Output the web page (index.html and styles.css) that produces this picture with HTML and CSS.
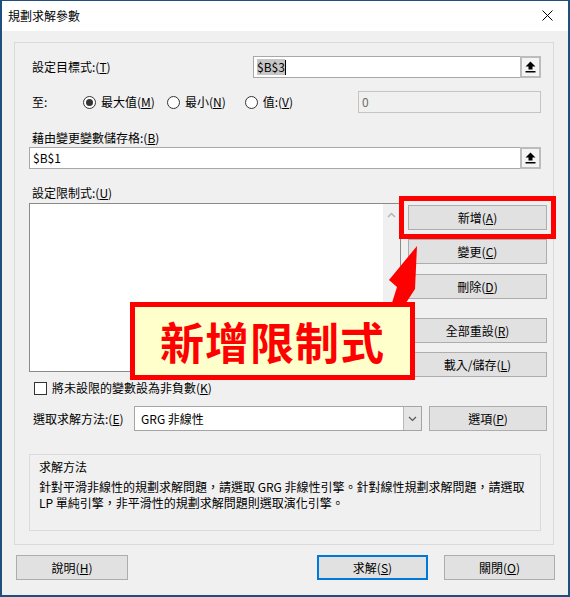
FILE: index.html
```html
<!DOCTYPE html>
<html lang="zh-Hant">
  <head>
    <meta charset="UTF-8" />
    <title>規劃求解參數</title>
    <link rel="stylesheet" href="styles.css">
  </head>
  <body>
    <div class="window">
      <div class="titlebar">
        <span class="title">規劃求解參數</span>
        <svg class="close" width="11" height="11" viewBox="0 0 11 11">
          <path d="M0.5 0.5 L10.5 10.5 M10.5 0.5 L0.5 10.5" stroke="#000" stroke-width="1" fill="none" />
        </svg>
      </div>

      <div class="content">
        <div class="panel">
          <!-- 目標式 -->
          <div class="row target-row">
            <span class="lbl target-lbl">設定目標式:(<u>T</u>)</span>
            <div class="ref-input target-input">
              <span class="selected">$B$3</span><span class="caret"></span>
              <span class="pick">
                <svg width="11" height="12" viewBox="0 0 11 12">
                  <polygon points="5.5,0.5 0.5,5.5 3.5,5.5 3.5,8.5 7.5,8.5 7.5,5.5 10.5,5.5" fill="#000" />
                  <rect x="0.5" y="10" width="10" height="1.5" fill="#000" />
                </svg>
              </span>
            </div>
          </div>

          <!-- 至 -->
          <div class="row to-row">
            <span class="lbl to-lbl">至:</span>
            <span class="radio checked"></span>
            <span class="radio-text">最大值(<u>M</u>)</span>
            <span class="radio r2"></span>
            <span class="radio-text">最小(<u>N</u>)</span>
            <span class="radio r3"></span>
            <span class="radio-text">值:(<u>V</u>)</span>
            <div class="value-input">0</div>
          </div>

          <div class="lbl block-lbl changing-lbl">藉由變更變數儲存格:(<u>B</u>)</div>
          <div class="ref-input full-input">
            <span class="plain">$B$1</span>
            <span class="pick">
              <svg width="11" height="12" viewBox="0 0 11 12">
                <polygon points="5.5,0.5 0.5,5.5 3.5,5.5 3.5,8.5 7.5,8.5 7.5,5.5 10.5,5.5" fill="#000" />
                <rect x="0.5" y="10" width="10" height="1.5" fill="#000" />
              </svg>
            </span>
          </div>

          <div class="lbl block-lbl cons-lbl">設定限制式:(<u>U</u>)</div>
          <div class="cons-area">
            <div class="cons-list">
              <div class="list-body"></div>
              <div class="scrollbar">
                <svg width="9" height="6" viewBox="0 0 9 6">
                  <path d="M1 5 L4.5 1.5 L8 5" stroke="#b4b4b4" stroke-width="1.5" fill="none" />
                </svg>
              </div>
            </div>
            <div class="cons-buttons">
              <button class="btn side-btn annotated">新增(<u>A</u>)</button>
              <button class="btn side-btn b-change">變更(<u>C</u>)</button>
              <button class="btn side-btn b-delete">刪除(<u>D</u>)</button>
              <button class="btn side-btn b-reset">全部重設(<u>R</u>)</button>
              <button class="btn side-btn b-load">載入/儲存(<u>L</u>)</button>
            </div>
          </div>

          <div class="check-row">
            <span class="checkbox"></span>
            <span>將未設限的變數設為非負數(<u>K</u>)</span>
          </div>

          <div class="row method-row">
            <span class="lbl method-lbl">選取求解方法:(<u>E</u>)</span>
            <div class="select">
              <span class="select-text">GRG 非線性</span>
              <span class="drop">
                <svg width="9" height="6" viewBox="0 0 9 6">
                  <path d="M1 1 L4.5 4.5 L8 1" stroke="#555" stroke-width="1.2" fill="none" />
                </svg>
              </span>
            </div>
            <button class="btn opt-btn">選項(<u>P</u>)</button>
          </div>

          <div class="groupbox">
            <div class="group-title">求解方法</div>
            <p class="group-text">針對平滑非線性的規劃求解問題，請選取 GRG 非線性引擎。針對線性規劃求解問題，請選取<br>LP 單純引擎，非平滑性的規劃求解問題則選取演化引擎。</p>
          </div>
        </div>

        <div class="footer">
          <button class="btn foot-btn help-btn">說明(<u>H</u>)</button>
          <span class="spacer"></span>
          <button class="btn foot-btn default">求解(<u>S</u>)</button>
          <button class="btn foot-btn close-btn">關閉(<u>O</u>)</button>
        </div>
      </div>
    </div>

    <!-- 標註 -->
    <svg class="arrow" width="570" height="597" viewBox="0 0 570 597">
      <polygon points="417,246 415,289 404,306 391,306 397,287 389,280" fill="#ff0000" />
    </svg>
    <div class="callout">新增限制式</div>
  </body>
</html>
```

FILE: styles.css
```css
/* dialog like the excel solver window */
* {
  box-sizing: border-box;
}

body {
  margin: 0;
  position: relative;
  width: 570px;
  height: 597px;
  font-family: "Noto Sans CJK TC", "Noto Sans CJK SC", sans-serif;
  font-size: 12px;
  line-height: 16px;
  color: #000;
  background: #fff;
}

u {
  text-decoration: underline;
  text-underline-offset: 1px;
}

.window {
  width: 570px;
  height: 597px;
  border: 2px solid #1f4f7e;
  border-top-width: 1px;
  background: #f0f0f0;
  display: flex;
  flex-direction: column;
}

.titlebar {
  height: 30px;
  background: #fff;
  display: flex;
  align-items: center;
  padding-left: 6px;
}

.titlebar .close {
  margin-left: auto;
  margin-right: 15px;
  margin-top: -1px;
}

.content {
  padding: 11px 14px 0 12px;
}

.panel {
  border: 1px solid #dadada;
  padding: 0 6px 13px 14px;
  display: flex;
  flex-direction: column;
}

.row {
  display: flex;
  align-items: center;
}

.lbl {
  padding-left: 3px;
  white-space: nowrap;
}

.target-row {
  margin-top: 13px;
  height: 22px;
}

.target-lbl {
  width: 224px;
}

.ref-input {
  height: 22px;
  border: 1px solid #a8a8a8;
  background: #fff;
  display: flex;
  align-items: center;
  padding-left: 3px;
}

.target-input {
  width: 288px;
}

.full-input {
  width: 512px;
  margin-top: 1px;
}

.selected {
  background: #c6c6c6;
}

.caret {
  width: 1px;
  height: 15px;
  background: #000;
}

.pick {
  margin: -1px -1px -1px auto;
  width: 21px;
  height: 22px;
  border: 2px solid #bcbcbc;
  background: #f4f4f4;
  display: flex;
  align-items: center;
  justify-content: center;
}

.to-row {
  margin-top: 13px;
  height: 22px;
}

.to-lbl {
  width: 54px;
}

.radio {
  width: 13px;
  height: 13px;
  border: 1px solid #333;
  border-radius: 50%;
  background: #fff;
  margin-right: 5px;
  flex: none;
  display: flex;
  align-items: center;
  justify-content: center;
}

.radio.checked::after {
  content: "";
  width: 7px;
  height: 7px;
  border-radius: 50%;
  background: #333;
}

.r2 {
  margin-left: 12px;
}

.r3 {
  margin-left: 19px;
}

.value-input {
  margin-left: auto;
  margin-right: 6px;
  width: 183px;
  height: 22px;
  border: 1px solid #c4c4c4;
  background: #f0f0f0;
  color: #6d6d6d;
  padding-left: 3px;
  line-height: 20px;
}

.block-lbl {
  height: 16px;
}

.changing-lbl {
  margin-top: 17px;
}

.cons-lbl {
  margin-top: 16px;
}

.cons-area {
  margin-top: 2px;
  display: flex;
  align-items: flex-start;
}

.cons-list {
  width: 372px;
  height: 169px;
  border: 1px solid #8a8a8a;
  display: flex;
}

.list-body {
  flex: 1;
  background: #fff;
}

.scrollbar {
  width: 17px;
  background: #f0f0f0;
  display: flex;
  justify-content: center;
  padding-top: 8px;
}

.cons-buttons {
  margin-left: 7px;
  display: flex;
  flex-direction: column;
}

.btn {
  font: inherit;
  color: #000;
  background: #e1e1e1;
  border: 1px solid #adadad;
  height: 25px;
  padding: 0;
  display: flex;
  align-items: center;
  justify-content: center;
}

.side-btn {
  width: 139px;
}

.annotated {
  margin-top: 2px;
  outline: 5px solid #ff0000;
  outline-offset: 4px;
}

.b-change {
  margin-top: 9px;
}

.b-delete {
  margin-top: 10px;
}

.b-reset {
  margin-top: 19px;
}

.b-load {
  margin-top: 9px;
}

.check-row {
  margin-top: 3px;
  height: 16px;
  display: flex;
  align-items: center;
  padding-left: 5px;
}

.checkbox {
  width: 13px;
  height: 13px;
  border: 1px solid #333;
  background: #fff;
  margin-right: 5px;
}

.method-row {
  margin-top: 10px;
  height: 25px;
}

.method-lbl {
  width: 105px;
  padding-left: 4px;
}

.select {
  width: 288px;
  height: 25px;
  border: 1px solid #a5a5a5;
  background: #fff;
  display: flex;
}

.select-text {
  padding-left: 6px;
  line-height: 23px;
}

.drop {
  margin-left: auto;
  width: 18px;
  background: #e5e5e5;
  border-left: 1px solid #b9b9b9;
  display: flex;
  align-items: center;
  justify-content: center;
}

.opt-btn {
  margin-left: 7px;
  width: 118px;
}

.groupbox {
  margin-top: 23px;
  width: 512px;
  height: 77px;
  border: 1px solid #dadada;
  padding: 4px 0 0 9px;
}

.group-text {
  margin: 4px 0 0;
}

.footer {
  margin-top: 10px;
  margin-right: -1px;
  display: flex;
}

.foot-btn {
  width: 111px;
}

.help-btn {
  margin-left: 2px;
  width: 112px;
}

.spacer {
  flex: 1;
}

.default {
  border: 2px solid #0078d7;
}

.close-btn {
  margin-left: 16px;
}

/* annotation on top of the dialog */
.arrow {
  position: absolute;
  left: 0;
  top: 0;
  pointer-events: none;
}

.callout {
  position: absolute;
  left: 130px;
  top: 302px;
  width: 285px;
  height: 78px;
  border: 5px solid #ff0000;
  background: #ffffcc;
  color: #ff0000;
  font-size: 44px;
  font-weight: bold;
  line-height: 1;
  letter-spacing: 1px;
  display: flex;
  align-items: center;
  justify-content: center;
}
```
